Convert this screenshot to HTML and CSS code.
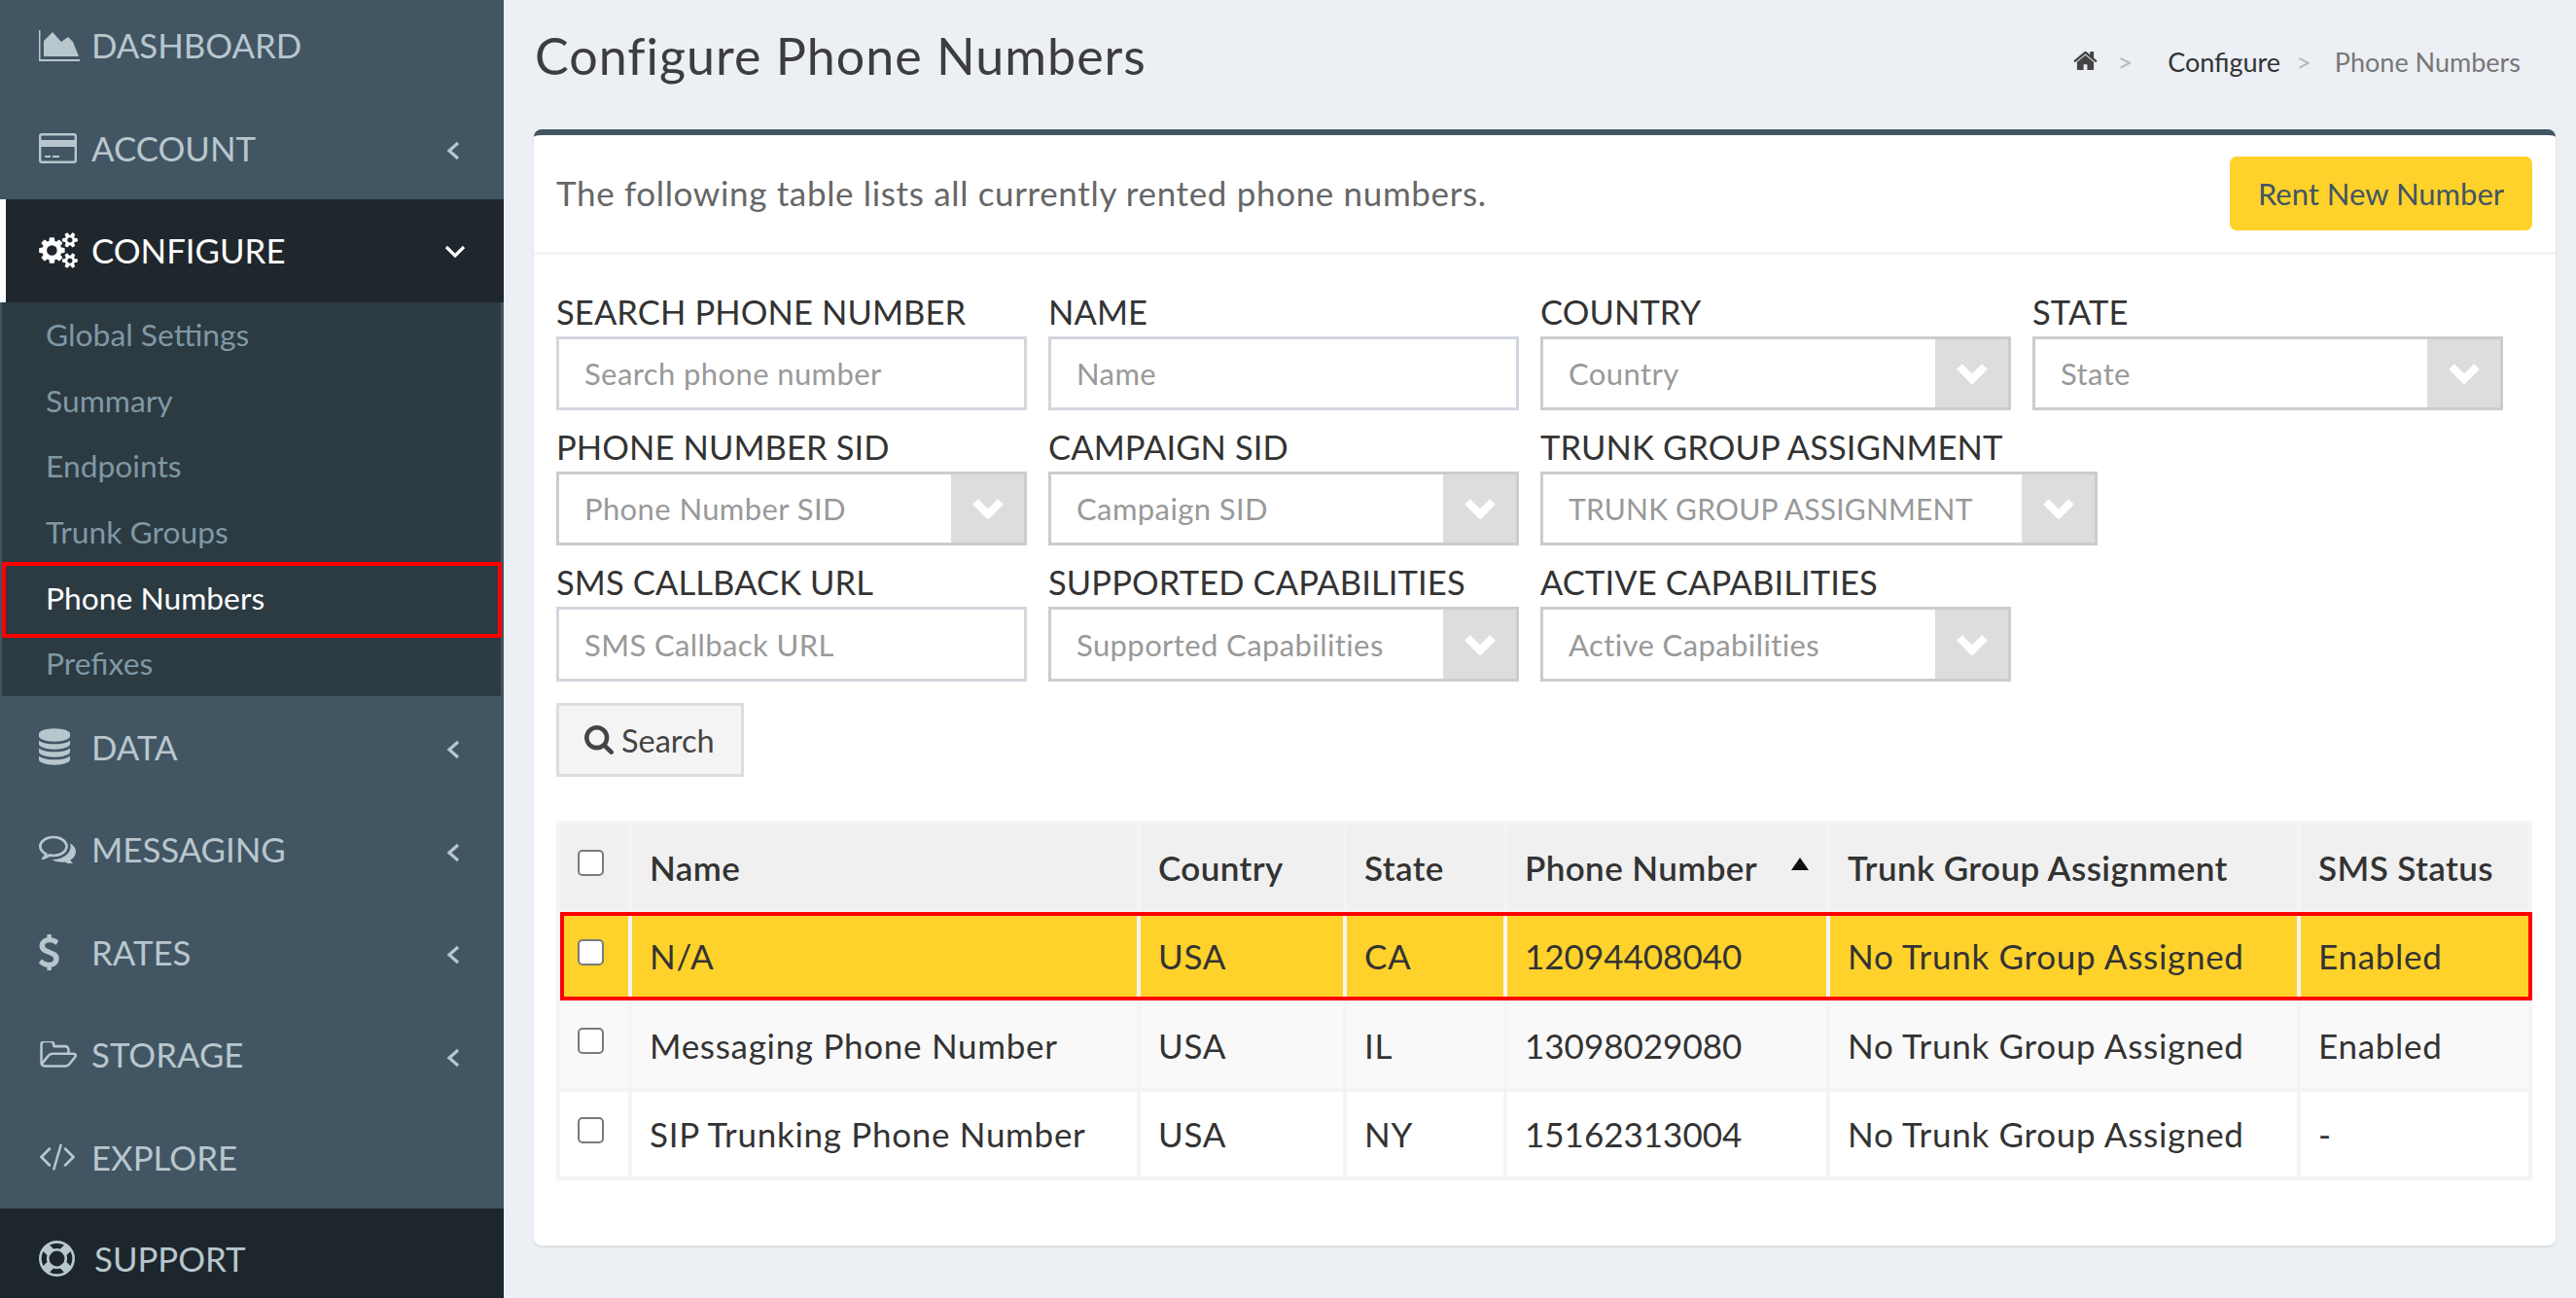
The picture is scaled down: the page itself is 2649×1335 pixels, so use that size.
FILE: index.html
```html
<!DOCTYPE html>
<html lang="en">
<head>
<meta charset="utf-8">
<title>Configure Phone Numbers</title>
<link rel="stylesheet" href="styles.css">
</head>
<body>
<div class="app">
  <aside class="sidebar">
    <ul class="nav">
      <li class="nav-item"><span class="nav-icon"><svg class="i-area" viewBox="0 0 42 32"><path d="M0 0h1.500v30h40.500v2H0z"/><path d="M5 27V11l9-9 9 10 7-5 5 5 6 15z"/></svg></span><span class="nav-label">DASHBOARD</span></li>
      <li class="nav-item"><span class="nav-icon"><svg class="i-card" viewBox="0 0 39 31"><path fill-rule="evenodd" d="M3 0h33a3 3 0 0 1 3 3v25a3 3 0 0 1-3 3H3a3 3 0 0 1-3-3V3a3 3 0 0 1 3-3zm0 2.500a.6.6 0 0 0-.6.6V7h34.200V3.100a.6.6 0 0 0-.6-.6zM2.400 14v14a.6.6 0 0 0 .6.6h33a.6.6 0 0 0 .6-.6V14z"/><path d="M6 23h6v2H6zM14 23h7v2h-7z"/></svg></span><span class="nav-label">ACCOUNT</span><svg class="chev-left" viewBox="0 0 14 20"><path d="M12 2 3 10l9 8"/></svg></li>
      <li class="nav-item active"><span class="nav-icon"><svg class="i-cogs" viewBox="0 0 1920 1792"><path d="M896 896q0-106-75-181t-181-75-181 75-75 181 75 181 181 75 181-75 75-181zm768 512q0-52-38-90t-90-38-90 38-38 90q0 53 37.500 90.500t90.500 37.500 90.500-37.500 37.500-90.500zm0-1024q0-52-38-90t-90-38-90 38-38 90q0 53 37.500 90.500t90.500 37.500 90.500-37.500 37.500-90.500zm-384 421v185q0 10-7 19.500t-16 10.500l-155 24q-11 35-32 76 34 48 90 115 7 11 7 20 0 12-7 19-23 30-82.500 89.500t-78.500 59.500q-11 0-21-7l-115-90q-37 19-77 31-11 108-23 155-7 24-30 24h-186q-11 0-20-7.500t-10-17.500l-23-153q-34-10-75-31l-118 89q-7 7-20 7-11 0-21-8-144-133-144-160 0-9 7-19 10-14 41-53t47-61q-23-44-35-82l-152-24q-10-1-17-9.500t-7-19.500v-185q0-10 7-19.500t16-10.500l155-24q11-35 32-76-34-48-90-115-7-11-7-20 0-12 7-20 22-30 82-89t79-59q11 0 21 7l115 90q34-18 77-32 11-108 23-154 7-24 30-24h186q11 0 20 7.500t10 17.500l23 153q34 10 75 31l118-89q8-7 20-7 11 0 21 8 144 133 144 160 0 8-7 19-12 16-42 54t-45 60q23 48 34 82l152 23q10 2 17 10.500t7 19.500zm640 533v140q0 16-149 31-12 27-30 52 51 113 51 138 0 4-4 7-122 71-124 71-8 0-46-47t-52-68q-20 2-30 2t-30-2q-14 21-52 68t-46 47q-2 0-124-71-4-3-4-7 0-25 51-138-18-25-30-52-149-15-149-31v-140q0-16 149-31 13-29 30-52-51-113-51-138 0-4 4-7 4-2 35-20t59-34 30-16q8 0 46 46.500t52 67.500q20-2 30-2t30 2q51-71 92-112l6-2q4 0 124 70 4 3 4 7 0 25-51 138 17 23 30 52 149 15 149 31zm0-1024v140q0 16-149 31-12 27-30 52 51 113 51 138 0 4-4 7-122 71-124 71-8 0-46-47t-52-68q-20 2-30 2t-30-2q-14 21-52 68t-46 47q-2 0-124-71-4-3-4-7 0-25 51-138-18-25-30-52-149-15-149-31v-140q0-16 149-31 13-29 30-52-51-113-51-138 0-4 4-7 4-2 35-20t59-34 30-16q8 0 46 46.500t52 67.500q20-2 30-2t30 2q51-71 92-112l6-2q4 0 124 70 4 3 4 7 0 25-51 138 17 23 30 52 149 15 149 31z"/></svg></span><span class="nav-label">CONFIGURE</span><svg class="chev-down" viewBox="0 0 22 14"><path d="M2 2l9 9 9-9"/></svg></li>
      <li class="subnav-wrap">
        <ul class="subnav">
          <li class="sub-item">Global Settings</li>
          <li class="sub-item">Summary</li>
          <li class="sub-item">Endpoints</li>
          <li class="sub-item">Trunk Groups</li>
          <li class="sub-item current">Phone Numbers</li>
          <li class="sub-item">Prefixes</li>
        </ul>
      </li>
      <li class="nav-item"><span class="nav-icon"><svg class="i-db" viewBox="128 0 1536 1792"><path d="M896 768q237 0 443-43t325-127v170q0 69-103 128t-280 93.500-385 34.500-385-34.500-280-93.500-103-128v-170q119 84 325 127t443 43zm0 768q237 0 443-43t325-127v170q0 69-103 128t-280 93.500-385 34.500-385-34.500-280-93.500-103-128v-170q119 84 325 127t443 43zm0-384q237 0 443-43t325-127v170q0 69-103 128t-280 93.500-385 34.500-385-34.500-280-93.500-103-128v-170q119 84 325 127t443 43zm0-1152q208 0 385 34.500t280 93.500 103 128v128q0 69-103 128t-280 93.500-385 34.500-385-34.500-280-93.500-103-128v-128q0-69 103-128t280-93.500 385-34.500z"/></svg></span><span class="nav-label">DATA</span><svg class="chev-left" viewBox="0 0 14 20"><path d="M12 2 3 10l9 8"/></svg></li>
      <li class="nav-item"><span class="nav-icon"><svg class="i-comments" viewBox="0 240 1792 1340"><path d="M704 384q-153 0-286 52t-211.500 141-78.500 191q0 82 53 158t149 132l97 56-35 84q34-20 62-39l44-31 53 10q78 14 153 14 153 0 286-52t211.500-141 78.500-191-78.500-191-211.500-141-286-52zm0-128q191 0 353.500 68.500t256.500 186.500 94 257-94 257-256.500 186.500-353.500 68.500q-86 0-176-16-124 88-278 128-36 9-86 16h-3q-11 0-20.500-8t-11.500-21q-1-3-1-6.500t.5-6.500 2-6l2.500-5 3.500-5.500 4-5 4.500-5 4-4.500q5-6 23-25t26-29.500 22.500-29 25-38.500 20.500-44q-124-72-195-177t-71-224q0-139 94-257t256.500-186.500 353.500-68.500zm822 1169q10 24 20.500 44t25 38.500 22.500 29 26 29.500 23 25q1 1 4 4.500t4.500 5 4 5 3.500 5.500l2.500 5 2 6 .5 6.500-1 6.500q-3 14-13 22t-22 7q-50-7-86-16-154-40-278-128-90 16-176 16-271 0-472-132 58 4 88 4 161 0 309-45t264-129q125-92 192-212t67-254q0-77-23-152 129 71 204 178t75 230q0 120-71 224.500t-195 176.500z"/></svg></span><span class="nav-label">MESSAGING</span><svg class="chev-left" viewBox="0 0 14 20"><path d="M12 2 3 10l9 8"/></svg></li>
      <li class="nav-item"><span class="nav-icon"><svg class="i-dollar" viewBox="430 64 940 1664"><path d="M1362 1185q0 153-99.500 263.500t-258.500 136.500v175q0 14-9 23t-23 9h-135q-13 0-22.500-9.500t-9.500-22.500v-175q-66-9-127.500-31t-101.500-44.500-74-48-46.500-37.500-17.500-18q-17-21-2-41l103-135q7-10 23-12 15-2 24 9l2 2q113 99 243 125 37 8 74 8 81 0 142.500-43t61.500-122q0-28-15-53t-33.500-42-58.500-37.500-66-32-80-32.500q-39-16-61.500-25t-61.500-26.500-62.500-31-56.500-35.500-53.500-42.500-43.500-49-35.500-58-21-66.500-8.500-78q0-138 98-242t255-134v-180q0-13 9.500-22.500t22.500-9.500h135q14 0 23 9t9 23v176q57 6 110.500 23t87 33.500 63.500 37.500 39 29 15 14q17 18 5 38l-81 146q-8 15-23 16-14 3-27-7-3-3-14.500-12t-39-26.500-58.500-32-74.500-26-85.500-11.500q-95 0-155 43t-60 111q0 26 8.500 48t29.500 41.500 39.500 33 56 31 60.500 27 70 27.500q53 20 81 31.500t76 35 75.500 42.500 62 50 53 63.500 31.500 76.500 13 94z"/></svg></span><span class="nav-label">RATES</span><svg class="chev-left" viewBox="0 0 14 20"><path d="M12 2 3 10l9 8"/></svg></li>
      <li class="nav-item"><span class="nav-icon"><svg class="i-folder" viewBox="0 224 1972 1344"><path d="M1845 931q0-35-53-35h-1088q-40 0-85.500 21.500t-71.500 52.500l-294 363q-18 24-18 40 0 35 53 35h1088q40 0 86-22t71-53l294-363q18-22 18-39zm-1141-163h768v-160q0-40-28-68t-68-28h-576q-40 0-68-28t-28-68v-64q0-40-28-68t-68-28h-320q-40 0-68 28t-28 68v853l256-315q44-53 116-87.500t140-34.500zm1269 163q0 62-46 120l-295 363q-43 53-116 87.500t-140 34.500h-1088q-92 0-158-66t-66-158v-960q0-92 66-158t158-66h320q92 0 158 66t66 158v32h544q92 0 158 66t66 158v160h192q54 0 99 24.500t67 70.500q15 32 15 68z"/></svg></span><span class="nav-label">STORAGE</span><svg class="chev-left" viewBox="0 0 14 20"><path d="M12 2 3 10l9 8"/></svg></li>
      <li class="nav-item"><span class="nav-icon"><svg class="i-code" viewBox="0 290 1920 1340"><path d="M617 1399l-50 50q-10 10-23 10t-23-10l-466-466q-10-10-10-23t10-23l466-466q10-10 23-10t23 10l50 50q10 10 10 23t-10 23l-393 393 393 393q10 10 10 23t-10 23zm591-1067l-373 1291q-4 13-15.500 19.500t-23.500 2.500l-62-17q-13-4-19.500-15.500t-2.500-24.500l373-1291q4-13 15.500-19.500t23.500-2.500l62 17q13 4 19.500 15.500t2.500 24.500zm657 651l-466 466q-10 10-23 10t-23-10l-50-50q-10-10-10-23t10-23l393-393-393-393q-10-10-10-23t10-23l50-50q10-10 23-10t23 10l466 466q10 10 10 23t-10 23z"/></svg></span><span class="nav-label">EXPLORE</span></li>
    </ul>
    <div class="support"><span class="nav-icon support-icon"><svg class="i-ring" viewBox="0 0 1792 1792"><path d="M896 0q182 0 348 71t286 191 191 286 71 348-71 348-191 286-286 191-348 71-348-71-286-191-191-286-71-348 71-348 191-286 286-191 348-71zm0 128q-190 0-361 90l194 194q82-28 167-28t167 28l194-194q-171-90-361-90zm-678 1129l194-194q-28-82-28-167t28-167l-194-194q-90 171-90 361t90 361zm678 407q190 0 361-90l-194-194q-82 28-167 28t-167-28l-194 194q171 90 361 90zm0-384q159 0 271.500-112.500t112.500-271.500-112.500-271.500-271.500-112.500-271.500 112.500-112.500 271.500 112.500 271.500 271.500 112.500zm484-217l194 194q90-171 90-361t-90-361l-194 194q28 82 28 167t-28 167z"/></svg></span><span class="nav-label">SUPPORT</span></div>
  </aside>

  <main class="main">
    <header class="page-header">
      <h1 class="title">Configure Phone Numbers</h1>
      <nav class="crumbs">
        <svg class="i-home" viewBox="0 128 1664 1408"><path d="M1408 992v480q0 26-19 45t-45 19h-384v-384h-256v384h-384q-26 0-45-19t-19-45v-480q0-1 .5-3t.5-3l575-474 575 474q1 2 1 6zm223-69l-62 74q-8 9-21 11h-3q-13 0-21-7l-692-577-692 577q-12 8-24 7-13-2-21-11l-62-74q-8-10-7-23.500t11-21.500l719-599q32-26 76-26t76 26l244 204v-195q0-14 9-23t23-9h192q14 0 23 9t9 23v408l219 182q10 8 11 21.500t-7 23.500z"/></svg>
        <span class="sep sep-first">&gt;</span>
        <span class="crumb-link">Configure</span>
        <span class="sep sep-second">&gt;</span>
        <span class="crumb-current">Phone Numbers</span>
      </nav>
    </header>

    <section class="card">
      <div class="card-head">
        <p class="lead">The following table lists all currently rented phone numbers.</p>
        <button class="btn-rent" type="button">Rent New Number</button>
      </div>
      <div class="card-body">
        <form class="filters">
          <div class="filter-row">
            <div class="field"><label>SEARCH PHONE NUMBER</label><input class="control" type="text" placeholder="Search phone number"></div>
            <div class="field"><label>NAME</label><input class="control" type="text" placeholder="Name"></div>
            <div class="field"><label>COUNTRY</label><div class="control select"><span class="ph">Country</span><span class="arrow"><svg viewBox="0 0 34 22"><path d="M4 4l13 13L30 4"/></svg></span></div></div>
            <div class="field"><label>STATE</label><div class="control select"><span class="ph">State</span><span class="arrow"><svg viewBox="0 0 34 22"><path d="M4 4l13 13L30 4"/></svg></span></div></div>
          </div>
          <div class="filter-row">
            <div class="field"><label>PHONE NUMBER SID</label><div class="control select"><span class="ph">Phone Number SID</span><span class="arrow"><svg viewBox="0 0 34 22"><path d="M4 4l13 13L30 4"/></svg></span></div></div>
            <div class="field"><label>CAMPAIGN SID</label><div class="control select"><span class="ph">Campaign SID</span><span class="arrow"><svg viewBox="0 0 34 22"><path d="M4 4l13 13L30 4"/></svg></span></div></div>
            <div class="field field-wide"><label>TRUNK GROUP ASSIGNMENT</label><div class="control select"><span class="ph ph-caps">TRUNK GROUP ASSIGNMENT</span><span class="arrow"><svg viewBox="0 0 34 22"><path d="M4 4l13 13L30 4"/></svg></span></div></div>
          </div>
          <div class="filter-row">
            <div class="field"><label>SMS CALLBACK URL</label><input class="control tall" type="text" placeholder="SMS Callback URL"></div>
            <div class="field"><label>SUPPORTED CAPABILITIES</label><div class="control select tall"><span class="ph">Supported Capabilities</span><span class="arrow"><svg viewBox="0 0 34 22"><path d="M4 4l13 13L30 4"/></svg></span></div></div>
            <div class="field"><label>ACTIVE CAPABILITIES</label><div class="control select tall"><span class="ph">Active Capabilities</span><span class="arrow"><svg viewBox="0 0 34 22"><path d="M4 4l13 13L30 4"/></svg></span></div></div>
          </div>
          <button class="btn-search" type="button"><svg class="i-search" viewBox="64 128 1664 1664"><path d="M1216 832q0-185-131.500-316.500t-316.500-131.500-316.500 131.500-131.500 316.500 131.500 316.500 316.500 131.500 316.500-131.500 131.500-316.500zm512 832q0 52-38 90t-90 38q-54 0-90-38l-343-342q-179 124-399 124-143 0-273.500-55.500t-225-150-150-225-55.500-273.500 55.500-273.500 150-225 225-150 273.500-55.500 273.500 55.500 225 150 150 225 55.500 273.500q0 220-124 399l343 343q37 37 37 90z"/></svg>Search</button>
        </form>

        <div class="table-wrap">
          <table class="grid">
            <colgroup><col class="c-check"><col class="c-name"><col class="c-country"><col class="c-state"><col class="c-phone"><col class="c-trunk"><col class="c-sms"></colgroup>
            <thead>
              <tr><th class="check"><span class="box"></span></th><th>Name</th><th>Country</th><th>State</th><th><div class="sortable">Phone Number<span class="sort-up"></span></div></th><th>Trunk Group Assignment</th><th>SMS Status</th></tr>
            </thead>
            <tbody>
              <tr class="selected"><td class="check"><span class="box"></span></td><td>N/A</td><td>USA</td><td>CA</td><td class="num">12094408040</td><td>No Trunk Group Assigned</td><td>Enabled</td></tr>
              <tr class="striped"><td class="check"><span class="box"></span></td><td>Messaging Phone Number</td><td>USA</td><td>IL</td><td class="num">13098029080</td><td>No Trunk Group Assigned</td><td>Enabled</td></tr>
              <tr><td class="check"><span class="box"></span></td><td>SIP Trunking Phone Number</td><td>USA</td><td>NY</td><td class="num">15162313004</td><td>No Trunk Group Assigned</td><td>-</td></tr>
            </tbody>
          </table>
          <div class="row-mark"></div>
        </div>
      </div>
    </section>
  </main>
</div>
</body>
</html>
```

FILE: styles.css
```css
* { box-sizing: border-box; }
html, body { margin: 0; padding: 0; height: 100%; overflow: hidden; }
body { font-family: "Lato", "Noto Sans", sans-serif; color: #333; background: #eceff4; }
ul { list-style: none; margin: 0; padding: 0; }
.app { display: flex; width: 2649px; height: 1335px; overflow: hidden; }

/* sidebar */
.sidebar { width: 518px; flex: none; height: 1335px; background: #425563; display: flex; flex-direction: column; overflow: hidden; color: #b8c7ce; }
.nav { margin-top: -6px; }
.nav-item { height: 105.4px; display: flex; align-items: center; padding-left: 40px; padding-right: 45px; font-size: 34.800px; }
.nav-icon { width: 54px; flex: none; display: flex; align-items: center; }
.nav-icon svg { fill: currentColor; display: block; }
.nav-label { flex: 1; }
.i-area { width: 42px; height: 32px; }
.i-card { width: 39px; height: 31px; }
.i-cogs { width: 40px; height: 37px; }
.i-db { width: 32px; height: 38px; }
.i-comments { width: 38px; height: 29px; }
.i-dollar { width: 21px; height: 37px; }
.i-folder { width: 39px; height: 28px; }
.i-code { width: 38px; height: 28px; }
.i-ring { width: 37px; height: 37px; }
.chev-left { width: 14px; height: 20px; fill: none; stroke: currentColor; stroke-width: 3.2; margin-top: 6px; }
.chev-down { width: 22px; height: 14px; fill: none; stroke: #fff; stroke-width: 3.2; margin-top: 2px; }
.nav-item.active { height: 106px; background: #1f272d; color: #fff; border-left: 6px solid #fff; padding-left: 34px; padding-right: 39px; }
.subnav-wrap { padding: 0 3px 0 2px; }
.subnav { height: 405px; background: #2c3a42; font-size: 31.800px; color: #7f98a4; }
.sub-item { height: 67.5px; display: flex; align-items: center; padding-left: 45px; padding-bottom: 1px; }
.sub-item.current { color: #fff; border: 4px solid #f00; padding-left: 41px; padding-bottom: 4px; height: 78px; margin: -3px -1px -7.500px 0; position: relative; }
.support { margin-top: auto; height: 92px; flex: none; background: #1e262d; display: flex; align-items: center; padding-left: 40px; padding-top: 10px; font-size: 34.800px; }
.support-icon { width: 57px; }

/* main */
.main { flex: 1; min-width: 0; }
.page-header { height: 133px; display: flex; justify-content: space-between; padding-right: 57px; padding-left: 32px; }
.title { margin: 24px 0 0; font-size: 52px; line-height: 66px; font-weight: 400; letter-spacing: 1px; color: #3d3d3d; }
.crumbs { display: flex; align-items: center; height: 40px; margin-top: 43px; font-size: 27px; color: #777; }
.i-home { width: 25px; height: 21px; fill: #444; margin-bottom: 4px; }
.sep { color: #b4b8c0; }
.sep-first { margin-left: 20px; margin-right: 36px; }
.sep-second { margin-left: 16px; margin-right: 24px; }
.crumb-link { color: #333; }
.crumb-current { color: #777; }

.card { margin: 0 21px 0 31px; height: 1148px; background: #fff; border-top: 6px solid #425563; border-radius: 8px; box-shadow: 0 2px 3px rgba(0, 0, 0, .08); }
.card-head { height: 123px; display: flex; align-items: flex-start; justify-content: space-between; padding: 22px 24px 0 23px; border-bottom: 3px solid #f4f4f4; }
.lead { margin: 0; font-size: 35px; line-height: 74px; letter-spacing: .65px; color: #666; }
.btn-rent { width: 311px; height: 76px; border: 0; border-radius: 7px; background: #ffd22b; color: #425563; font: inherit; font-size: 31px; padding: 0; }
.card-body { padding: 39px 24px 0 23px; }

.filter-row { display: flex; gap: 22px; margin-bottom: 18px; }
.filter-row:last-of-type { margin-bottom: 22px; }
.field { width: 484px; flex: none; }
.field-wide { width: 573px; }
.field label { display: block; font-size: 34.500px; line-height: 40px; margin-bottom: 5px; letter-spacing: .12px; color: #333; }
.control { display: block; width: 100%; height: 76px; background: #fff; border: 3px solid #d2d6de; padding: 0 0 0 26px; font-family: inherit; font-size: 31px; letter-spacing: .4px; color: #999; outline: 0; border-radius: 0; }
.control.tall { height: 77px; }
.control::placeholder { color: #999; opacity: 1; }
.select { display: flex; align-items: center; justify-content: space-between; padding: 0; border-color: #ccc; }
.ph { padding-left: 26px; white-space: nowrap; }
.ph-caps { font-size: 30px; letter-spacing: .2px; }
.arrow { width: 75px; align-self: stretch; flex: none; background: #ddd; display: flex; align-items: center; justify-content: center; }
.arrow svg { width: 34px; height: 22px; fill: none; stroke: #fff; stroke-width: 8; }
.btn-search { display: flex; align-items: center; width: 193px; height: 76px; background: #f4f4f4; border: 3px solid #ddd; color: #444; font: inherit; font-size: 32.500px; padding: 0 0 0 26px; }
.i-search { width: 30px; height: 30px; fill: #444; margin-right: 8px; flex: none; }

.table-wrap { position: relative; margin-top: 45px; width: 2032px; }
.grid { width: 2032px; table-layout: fixed; border-collapse: collapse; border: 4px solid #f4f4f4; font-size: 35px; letter-spacing: .7px; color: #333; }
.c-check { width: 74px; } .c-name { width: 523px; } .c-country { width: 212px; } .c-state { width: 165px; } .c-phone { width: 332px; } .c-trunk { width: 484px; } .c-sms { width: 238px; }
.grid th, .grid td { border: 4px solid #f4f4f4; height: 91.500px; padding: 0 0 0 18px; text-align: left; white-space: nowrap; font-weight: 400; }
.grid th { background: #f0f0f0; font-weight: 600; letter-spacing: .4px; }
.grid .num { letter-spacing: 0; }
.grid .check { padding: 0 0 8px 18px; }
.box { display: block; width: 27px; height: 27px; background: #fff; border: 2.500px solid #7a7a7a; border-radius: 5px; }
.selected td { background: #ffd22b; }
.striped td { background: #f9f9f9; }
.sortable { display: flex; align-items: center; justify-content: space-between; padding-right: 18px; }
.sort-up { width: 0; height: 0; border-left: 9px solid transparent; border-right: 9px solid transparent; border-bottom: 13px solid #111; margin-bottom: 6px; }
.row-mark { position: absolute; left: 4px; right: 0; top: 94px; height: 91px; border: 4px solid #f00; pointer-events: none; }
```
